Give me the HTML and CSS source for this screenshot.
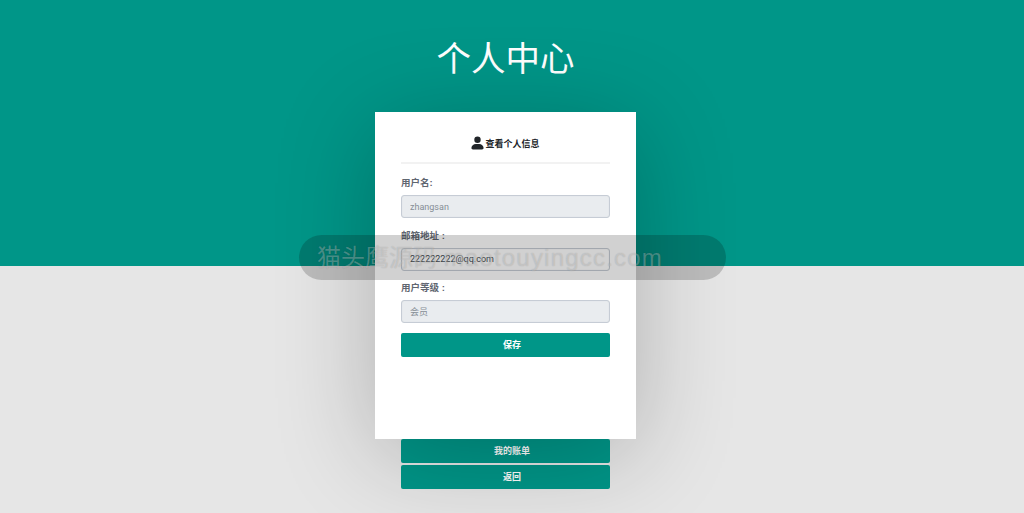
FILE: index.html
```html
<!DOCTYPE html>
<html lang="zh">
<head>
<meta charset="utf-8">
<title>个人中心</title>
<link rel="stylesheet" href="styles.css">
</head>
<body>
<div class="page">
  <h1 class="title">个人中心</h1>
  <main class="card">
    <h2 class="card-title">
      <svg class="user-icon" viewBox="0 0 16 16" aria-hidden="true"><path d="M8 8a3.900 3.900 0 1 0 0-7.900A3.900 3.900 0 0 0 8 8zm-5.600 7.900C1.300 15.900.5 15.200.5 14.100c0-2.700 2.500-5 5.500-5h4c3 0 5.500 2.300 5.500 5 0 1.100-.8 1.800-1.900 1.800z"/></svg>
      <span>查看个人信息</span>
    </h2>
    <form class="form">
      <div class="field">
        <label class="label">用户名:</label>
        <input class="input" placeholder="zhangsan" disabled>
      </div>
      <div class="field">
        <label class="label">邮箱地址 :</label>
        <input class="input editable" value="222222222@qq.com">
      </div>
      <div class="field">
        <label class="label">用户等级 :</label>
        <input class="input" placeholder="会员" disabled>
      </div>
      <button type="button" class="btn save">保存</button>
    </form>
  </main>
  <div class="links">
    <a class="btn">我的账单</a>
    <a class="btn">返回</a>
  </div>
</div>
<div class="watermark">猫头鹰源码 <span class="watermark-url">maotouyingcc.com</span></div>
</body>
</html>
```
FILE: styles.css
```css
* { box-sizing: border-box; }
html, body { margin: 0; height: 513px; overflow: hidden; }
body {
  font-family: "Liberation Sans", "Noto Sans CJK SC", sans-serif;
  background: linear-gradient(#009688 0, #009688 266px, #e6e6e6 266px);
  color: #212529;
  position: relative;
}
.page { display: flex; flex-direction: column; align-items: center; width: 1011px; }
.title {
  margin: 0;
  padding-top: 35px;
  height: 112px;
  font-size: 34.500px;
  line-height: 48px;
  font-weight: 400;
  color: #fff;
}
.card {
  position: relative;
  z-index: 1;
  width: 261px;
  height: 327px;
  padding: 16px 26px 0;
  background: #fff;
  box-shadow: 0 15px 100px rgba(0, 0, 0, .24);
}
.card-title {
  display: flex;
  justify-content: center;
  align-items: center;
  gap: 1px;
  margin: 0 0 4px;
  height: 30px;
  font-size: 9px;
  font-weight: 700;
  color: #212529;
}
.user-icon { width: 13px; height: 14px; fill: #212529; }
.form {
  border-top: 2px solid #f2f2f2;
  display: flex;
  flex-direction: column;
  padding-top: 12px;
}
.field { height: 52.500px; }
.label {
  display: block;
  height: 19px;
  font-size: 9.500px;
  line-height: 14px;
  color: #5f6670;
  font-weight: 700;
}
.input {
  display: block;
  width: 100%;
  height: 23px;
  padding: 0 8px;
  font: 9px Roboto, "Noto Sans CJK SC", sans-serif;
  color: #495057;
  background: #e9ecef;
  border: 1px solid #c6ccd5;
  border-radius: 3px;
  box-shadow: inset 0 0 1px #ced4da;
}
.input::placeholder { color: #868e96; opacity: 1; }
.editable { background: #fff; }
.btn {
  display: block;
  width: 209px;
  height: 24px;
  border: 0;
  border-radius: 2px;
  background: #009688;
  color: #fff;
  font: 700 9px/24px "Liberation Sans", "Noto Sans CJK SC", sans-serif;
  text-align: center;
  padding: 0 0 0 13px;
}
.save { margin-top: -1px; }
.links { display: flex; flex-direction: column; gap: 2px; }
.watermark {
  position: absolute;
  z-index: 2;
  left: 299px;
  top: 235px;
  width: 427px;
  height: 45px;
  padding-left: 18px;
  border-radius: 23px;
  background: rgba(0, 0, 0, .18);
  color: rgba(255, 255, 255, .28);
  text-shadow: 0 0 1px rgba(0, 0, 0, .2);
  font-size: 24px;
  line-height: 45px;
  white-space: nowrap;
}
.watermark-url { letter-spacing: 1.200px; }
```
